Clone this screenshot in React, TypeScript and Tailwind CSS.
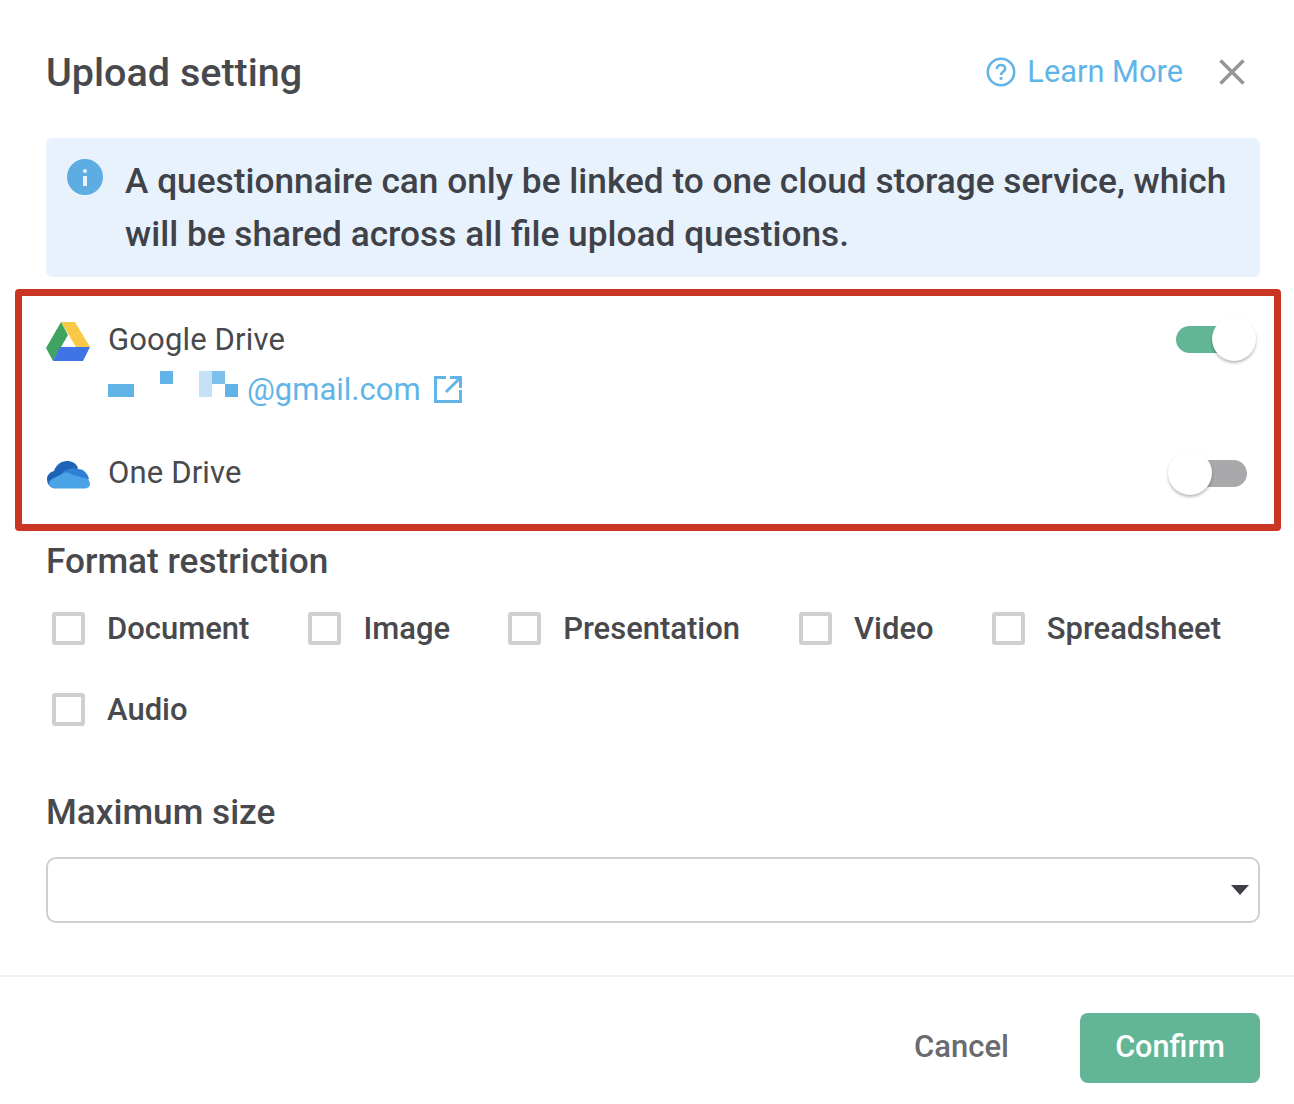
const formats = [
  { label: "Document", gap: "ml-[6px]" },
  { label: "Image", gap: "ml-[59px]" },
  { label: "Presentation", gap: "ml-[58px]" },
  { label: "Video", gap: "ml-[59px]" },
  { label: "Spreadsheet", gap: "ml-[58px]" },
];

function GoogleDriveIcon() {
  return (
    <svg width="44" height="39" viewBox="0 0 44 39" className="mt-[2px] shrink-0">
      <path d="M15 0H29L44 25H30Z" fill="#f9c847" />
      <path d="M15 0L0 26L7 39L22 13Z" fill="#3fa45f" />
      <path d="M14 25H44L37 39H7Z" fill="#3f74e6" />
    </svg>
  );
}

function OneDriveIcon() {
  return (
    <svg width="43" height="28" viewBox="0 0 43 28" className="ml-[1px] mt-[3px] shrink-0">
      <path d="M7 27C2 26 0 22 0 18C0 14 3 11 7 10C9 4 14 0 20 0C25 0 29 2 31 7L18 24Z" fill="#1f63b8" />
      <path d="M14 13C18 8 25 6 31 8C37 8 41 13 42 18L24 24Z" fill="#2f7fd4" />
      <path d="M8 27.5C4 27.5 2 25 2 22.5C2 20 4 18 7 17L19 11C23 13 30 15 41 18C42 20 43 21 43 23C43 26 40 27.5 37 27.5Z" fill="#4aa3e6" />
    </svg>
  );
}

function RedactedBlocks() {
  return (
    <svg width="132" height="28" viewBox="0 0 132 28" className="mt-[-10px] shrink-0">
      <rect x="0" y="14" width="26" height="13" fill="#62b4e8" />
      <rect x="52" y="1" width="13" height="13" fill="#62b4e8" />
      <rect x="91" y="1" width="13" height="26" fill="#c4e1f6" />
      <rect x="104" y="1" width="13" height="13" fill="#7cc0ec" />
      <rect x="117" y="14" width="13" height="13" fill="#62b4e8" />
    </svg>
  );
}

function Toggle({ on }: { on: boolean }) {
  return (
    <div className={`relative h-[27px] w-[71px] rounded-full ${on ? "bg-[#62b595]" : "bg-[#a9a9ab]"}`}>
      <div
        className={`absolute top-[-9px] h-[44px] w-[44px] rounded-full bg-white shadow-[0_2px_3px_rgba(0,0,0,0.28)] ${on ? "left-[36px]" : "left-[-8px]"}`}
      />
    </div>
  );
}

function Checkbox() {
  return <div className="h-[33px] w-[33px] shrink-0 rounded-[3px] border-[4px] border-[#cfcfcf] bg-white" />;
}

export default function App() {
  return (
    <div className="flex h-[1104px] w-[1294px] flex-col overflow-hidden bg-white font-['Roboto',sans-serif] text-[#3f4045]">
      <div className="pl-[46px] pr-[34px]">
        <header className="flex h-[138px] items-center justify-between pt-[7px]">
          <h1 className="text-[39.5px] font-medium leading-none text-[#48494d]">Upload setting</h1>
          <div className="flex items-center">
            <svg width="30" height="30" viewBox="0 0 30 30" fill="none" className="mr-[11px]">
              <circle cx="15" cy="15" r="13.2" stroke="#62b4e8" strokeWidth="2.6" />
              <path d="M10.8 12C10.8 9.6 12.7 8 15 8C17.4 8 19.2 9.6 19.2 11.7C19.2 14.6 15 14.8 15 18" stroke="#62b4e8" strokeWidth="2.6" />
              <rect x="13.6" y="20" width="2.8" height="2.8" fill="#62b4e8" />
            </svg>
            <span className="text-[30.8px] leading-none text-[#62b4e8]">Learn More</span>
            <svg width="26" height="26" viewBox="0 0 26 26" className="ml-[36px] mr-[15px]" stroke="#979797" strokeWidth="3.6">
              <path d="M1.5 1.5L24.5 24.5M24.5 1.5L1.5 24.5" />
            </svg>
          </div>
        </header>

        <div className="flex h-[139px] rounded-[6px] bg-[#e8f2fc] pl-[21px] pt-[17px]">
          <div className="mt-[4px] flex h-[36px] w-[36px] shrink-0 flex-col items-center rounded-full bg-[#5dade2] pt-[10px]">
            <div className="h-[4px] w-[4px] rounded-full bg-[#e8f2fc]" />
            <div className="mt-[3px] h-[10px] w-[4px] bg-[#e8f2fc]" />
          </div>
          <p className="ml-[22px] text-[35.25px] font-medium leading-[53px] text-[#3f4249]">
            A questionnaire can only be linked to one cloud storage service, which
            <br />
            will be shared across all file upload questions.
          </p>
        </div>

        <section className="ml-[-31px] mr-[-21px] mt-[12px] h-[242px] rounded-[4px] border-[7px] border-[#cb3524] pl-[24px] pr-[24px]">
          <div className="flex items-start justify-between pt-[24px]">
            <div className="flex items-start">
              <GoogleDriveIcon />
              <div className="ml-[18px]">
                <div className="mt-[2px] text-[31px] leading-[36px] tracking-[0.15px] text-[#48494d]">Google Drive</div>
                <div className="mt-[13px] flex h-[36px] items-center">
                  <RedactedBlocks />
                  <span className="ml-[7px] text-[31px] leading-none text-[#62b4e8]">@gmail.com</span>
                  <svg width="28" height="27" viewBox="0 0 28 27" fill="none" stroke="#62b4e8" strokeWidth="3" className="ml-[13px]">
                    <path d="M12 1.5H1.5V25.5H26.5V14" />
                    <path d="M26 2L12 16M16 1.5H26.5V12" />
                  </svg>
                </div>
              </div>
            </div>
            <div className="mr-[3px] mt-[6px]">
              <Toggle on />
            </div>
          </div>
          <div className="mt-[48px] flex items-center justify-between">
            <div className="flex items-center">
              <OneDriveIcon />
              <div className="ml-[18px] text-[31px] leading-[36px] tracking-[0.15px] text-[#48494d]">One Drive</div>
            </div>
            <div className="mr-[3px]">
              <Toggle on={false} />
            </div>
          </div>
        </section>

        <h2 className="mt-[10px] text-[35.2px] font-medium leading-[40px] text-[#48494d]">Format restriction</h2>
        <div className="mt-[31px] flex h-[33px] items-center">
          {formats.map((f) => (
            <label key={f.label} className={`flex items-center ${f.gap}`}>
              <Checkbox />
              <span className="ml-[22px] text-[31px] font-medium leading-none text-[#48494d]">{f.label}</span>
            </label>
          ))}
        </div>
        <div className="ml-[6px] mt-[48px] flex h-[33px] items-center">
          <Checkbox />
          <span className="ml-[22px] text-[31px] font-medium leading-none text-[#48494d]">Audio</span>
        </div>

        <h2 className="mt-[66px] text-[35.2px] font-medium leading-[40px] text-[#48494d]">Maximum size</h2>
        <div className="mt-[25px] flex h-[66px] items-center justify-end rounded-[10px] border-2 border-[#cfcfcf] pr-[9px]">
          <div className="h-0 w-0 border-x-[9px] border-t-[10px] border-x-transparent border-t-[#3f4045]" />
        </div>
      </div>

      <footer className="mt-[52px] flex items-start justify-end border-t-2 border-[#f0eff1] pl-[46px] pr-[34px] pt-[36px]">
        <button type="button" className="mr-[71px] h-[66px] text-[31px] font-medium leading-none text-[#6b6b6f]">
          Cancel
        </button>
        <button
          type="button"
          className="h-[70px] w-[180px] rounded-[8px] bg-[#62b595] pb-[2px] text-[30.6px] font-medium leading-none text-white"
        >
          Confirm
        </button>
      </footer>
    </div>
  );
}
